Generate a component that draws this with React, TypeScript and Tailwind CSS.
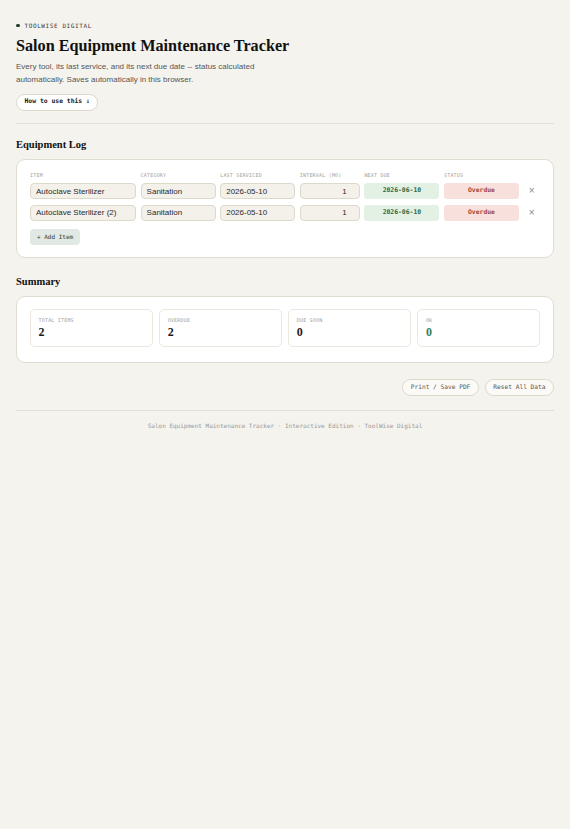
import React from "react";

const mono = "font-['DejaVu_Sans_Mono','Liberation_Mono',monospace]";
const serif = "font-['Liberation_Serif','Times_New_Roman',serif]";
const sans = "font-['Liberation_Sans',Arial,sans-serif]";

const rows = [
  { item: "Autoclave Sterilizer", cat: "Sanitation", last: "2026-05-10", interval: "1", next: "2026-06-10", status: "Overdue" },
  { item: "Autoclave Sterilizer (2)", cat: "Sanitation", last: "2026-05-10", interval: "1", next: "2026-06-10", status: "Overdue" },
];

const stats = [
  { label: "TOTAL ITEMS", value: "2", green: false },
  { label: "OVERDUE", value: "2", green: false },
  { label: "DUE SOON", value: "0", green: false },
  { label: "OK", value: "0", green: true },
];

const inputCls = `h-[16px] w-full rounded-[4px] border border-[#dcd8ca] bg-[#f3f1ea] px-[5px] text-[8px] text-[#2a2a2a] ${sans} outline-none`;

export default function App() {
  return (
    <div className="min-h-[829px] w-full bg-[#f4f3ee]">
      <div className="px-4 pt-[22px]">
        <div className="flex items-center gap-[5px]">
          <span className="h-[3.5px] w-[3.5px] rounded-full bg-[#1f3a2c]" />
          <span className={`${mono} text-[6px] leading-[7px] tracking-[0.1em] text-[#3a3a3a]`}>TOOLWISE DIGITAL</span>
        </div>
        <h1 className={`${serif} mt-[8px] text-[16.2px] font-bold leading-[19px] text-[#111]`}>
          Salon Equipment Maintenance Tracker
        </h1>
        <p className={`${sans} mt-[4px] w-[260px] text-[8px] leading-[13px] text-[#555]`}>
          Every tool, its last service, and its next due date -- status calculated automatically. Saves automatically in this browser.
        </p>
        <button
          className={`${mono} mt-[8px] flex h-[16.5px] items-center rounded-full border border-[#dcd8ca] bg-white px-[7.5px] text-[6.4px] font-bold text-[#1a1a1a]`}
        >
          How to use this ↓
        </button>
        <div className="mt-[12px] h-px w-full bg-[#e2dfd5]" />

        <h2 className={`${serif} mt-[14.5px] text-[10.5px] font-bold leading-[13px] text-[#111]`}>Equipment Log</h2>
        <div className="mt-[8px] rounded-[9px] border border-[#e0dccf] bg-white px-[13px] pb-[12px] pt-[12px]">
          <div
            className={`grid grid-cols-[106px_75px_75px_60px_75px_75px_1fr] gap-x-[4.6px] ${mono} text-[5px] leading-[6px] tracking-[0.04em] text-[#a0a0a0]`}
          >
            <div>ITEM</div>
            <div>CATEGORY</div>
            <div>LAST SERVICED</div>
            <div>INTERVAL (MO)</div>
            <div>NEXT DUE</div>
            <div>STATUS</div>
            <div />
          </div>
          <div className="mt-[5px] flex flex-col gap-[5.5px]">
            {rows.map((r, i) => (
              <div key={i} className="grid grid-cols-[106px_75px_75px_60px_75px_75px_1fr] items-center gap-x-[4.6px]">
                <input className={inputCls} defaultValue={r.item} />
                <input className={inputCls} defaultValue={r.cat} />
                <input className={inputCls} defaultValue={r.last} />
                <input className={`${inputCls} pr-[12px] text-right`} defaultValue={r.interval} />
                <div
                  className={`${mono} flex h-[16px] items-center justify-center rounded-[3px] bg-[#e2f1e4] text-[6.4px] font-bold text-[#2e6a45]`}
                >
                  {r.next}
                </div>
                <div
                  className={`${mono} flex h-[16px] items-center justify-center rounded-[3px] bg-[#f8e1dc] text-[6.4px] font-bold text-[#a0463a]`}
                >
                  {r.status}
                </div>
                <div className={`${sans} flex items-center justify-center text-[10px] leading-none text-[#8a8a8a]`}>×</div>
              </div>
            ))}
          </div>
          <button
            className={`${mono} mt-[8px] flex h-[16px] items-center rounded-[4px] bg-[#e1e9e4] px-[7px] text-[6px] text-[#2a3a32]`}
          >
            + Add Item
          </button>
        </div>

        <h2 className={`${serif} mt-[17px] text-[10.5px] font-bold leading-[13px] text-[#111]`}>Summary</h2>
        <div className="mt-[8px] rounded-[9px] border border-[#e0dccf] bg-white px-[13px] pb-[15.5px] pt-[12px]">
          <div className="grid grid-cols-4 gap-[6.5px]">
            {stats.map((s) => (
              <div key={s.label} className="h-[38px] rounded-[5px] border border-[#ebe8df] bg-white px-[7.5px] pt-[7px]">
                <div className={`${mono} text-[5px] leading-[6px] tracking-[0.04em] text-[#a0a0a0]`}>{s.label}</div>
                <div
                  className={`${serif} mt-[2px] text-[12px] font-bold leading-[14px] ${s.green ? "text-[#3b7a56]" : "text-[#1a1a1a]"}`}
                >
                  {s.value}
                </div>
              </div>
            ))}
          </div>
        </div>

        <div className="mt-[15.5px] flex justify-end gap-[6px]">
          <button
            className={`${mono} flex h-[17px] items-center rounded-full border border-[#dcd8ca] bg-[#fbfaf6] px-[7.5px] text-[6.2px] text-[#555]`}
          >
            Print / Save PDF
          </button>
          <button
            className={`${mono} flex h-[17px] items-center rounded-full border border-[#dcd8ca] bg-[#fbfaf6] px-[7.5px] text-[6.2px] text-[#555]`}
          >
            Reset All Data
          </button>
        </div>

        <div className="mt-[14.5px] h-px w-full bg-[#e2dfd5]" />
        <div className={`${mono} mt-[11px] text-center text-[6px] leading-[7px] text-[#999]`}>
          Salon Equipment Maintenance Tracker · Interactive Edition · ToolWise Digital
        </div>
      </div>
    </div>
  );
}
